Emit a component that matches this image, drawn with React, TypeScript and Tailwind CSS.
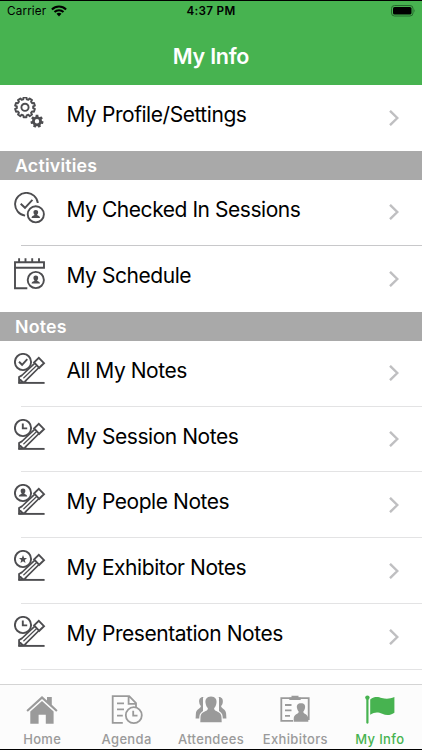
import type { ReactNode } from 'react';

const GREEN = '#47b350';

function gearPath(cx: number, cy: number, outer: number, inner: number, teeth: number) {
  const step = (Math.PI * 2) / teeth;
  const points: string[] = [];
  for (let i = 0; i < teeth; i++) {
    const a = i * step - Math.PI / 2;
    [
      [-0.32, inner],
      [-0.23, outer],
      [0.23, outer],
      [0.32, inner],
    ].forEach(([t, r]) => {
      points.push(
        `${(cx + Math.cos(a + t * step) * r).toFixed(2)} ${(cy + Math.sin(a + t * step) * r).toFixed(2)}`
      );
    });
  }
  return `M${points.join('L')}Z`;
}

function RowSvg({ children }: { children: ReactNode }) {
  return (
    <svg
      viewBox="0 0 32 32"
      className="w-8 h-8 shrink-0"
      fill="none"
      stroke="#4d4d50"
      strokeWidth="1.9"
    >
      {children}
    </svg>
  );
}

function Person({ x, y }: { x: number; y: number }) {
  return (
    <path
      transform={`translate(${x} ${y})`}
      d="M0-4.4C1.8-4.4 2.6-3.1 2.3-1.6C2.2-.7 1.4 0 1.3.5C1.3 1.3 4.1 1.4 4.2 3.6H-4.2C-4.1 1.4-1.3 1.3-1.3.5C-1.4 0-2.2-.7-2.3-1.6C-2.6-3.1-1.8-4.4 0-4.4Z"
      fill="#4d4d50"
      stroke="none"
    />
  );
}

function GearsIcon() {
  return (
    <RowSvg>
      <path d={gearPath(11, 10.3, 10, 8.2, 10)} strokeLinejoin="round" />
      <circle cx="11" cy="10.3" r="3.6" />
      <path
        d={`${gearPath(23, 24.3, 6.6, 5, 7)}M25.2 24.3a2.2 2.2 0 1 0-4.4 0a2.2 2.2 0 1 0 4.4 0Z`}
        fill="#4d4d50"
        fillRule="evenodd"
        stroke="none"
      />
    </RowSvg>
  );
}

function CheckedInIcon() {
  return (
    <RowSvg>
      <path d="M23.8 11A11.4 11.4 0 1 0 11.1 23.6" />
      <path d="M6.7 11.7L11 15.8L18.4 7.8" />
      <circle cx="21.8" cy="22.3" r="8.1" />
      <Person x={21.8} y={22.3} />
    </RowSvg>
  );
}

function ScheduleIcon() {
  return (
    <RowSvg>
      <path d="M1 4.3H30V9.8H1Z" />
      <path d="M5.1.2V4M11.5.2V4M18.2.2V4M25 .2V4M1 9V30.2H13.3" />
      <circle cx="21.8" cy="22" r="8.1" />
      <Person x={21.8} y={22} />
    </RowSvg>
  );
}

function NoteIcon({ children }: { children: ReactNode }) {
  return (
    <RowSvg>
      <circle cx="9" cy="9" r="8.1" />
      {children}
      <path d="M20.1 9.4L24.8 4.9L30 10.2L25.2 14.8Z" />
      <path d="M20.9 10.2L7.2 23M25 14.5L11.5 27.8" strokeWidth="1.7" />
      <path d="M22.9 12.3L9.4 25.3" strokeWidth="1.2" />
      <path d="M8 22.3L5.1 24V29.5L10.8 29L12 27.2M5 25.5L9 29.4" />
      <path d="M4.4 29.9H30.6" />
    </RowSvg>
  );
}

const noteCheck = <path d="M5 8.8L8.1 11.8L13.3 6.1" />;
const noteClock = <path d="M8.8 4.4V9.4H13.2" />;
const notePerson = <Person x={9} y={9} />;
const noteStar = (
  <path
    d="M9 5.1L10.1 7.9L13 8.1L10.8 10L11.5 12.9L9 11.3L6.5 12.9L7.2 10L5 8.1L7.9 7.9Z"
    fill="#4d4d50"
    stroke="none"
  />
);

interface IMenuRowProps {
  icon: ReactNode;
  label: string;
  divider?: string;
}

function MenuRow({ icon, label, divider }: IMenuRowProps) {
  return (
    <div className="flex flex-col h-[65.9px] shrink-0 bg-white">
      <div className="flex flex-1 items-center pl-3.5 pr-[23px]">
        <div className="pb-[9px]">{icon}</div>
        <span className="flex-1 ml-[20.5px] pb-[5px] text-[21px] leading-7 tracking-[-0.45px] text-black whitespace-nowrap">
          {label}
        </span>
        <svg viewBox="0 0 10 16" className="w-2.5 h-4" fill="none" stroke="#bfbfc1" strokeWidth="2.4">
          <path d="M1 .8L8.3 8L1 15.2" />
        </svg>
      </div>
      {divider && <div className={`h-px ml-[21px] ${divider}`} />}
    </div>
  );
}

function SectionTitle({ title }: { title: string }) {
  return (
    <div className="flex items-center h-[29px] shrink-0 pl-[15px] pt-0.5 bg-[#a9a9a9] text-white text-[17.8px] font-semibold tracking-[0.2px]">
      {title}
    </div>
  );
}

function TabSvg({ children }: { children: ReactNode }) {
  return (
    <svg viewBox="0 0 32 30" className="w-8 h-[30px]" fill="currentColor">
      {children}
    </svg>
  );
}

const tabs = [
  {
    label: 'Home',
    icon: (
      <TabSvg>
        <path d="M.4 15.2L16 1L21 5.4V2H25.8V9.8L31.6 15.2L30.2 16.8L16 4.1L1.8 16.8Z" />
        <path d="M4.3 16.5L16 6.1L27.6 16.5V28.7H19.8V19.8H12.6V28.7H4.3Z" />
      </TabSvg>
    ),
  },
  {
    label: 'Agenda',
    icon: (
      <TabSvg>
        <g fill="none" stroke="currentColor" strokeWidth="1.8">
          <path d="M11.8 27.8H1.7V1.2H18.2L25 8.2V12.2M17.6 1.2V8.8H25M6 8.3H13M6 14.4H13M6 20.6H11.8" />
          <circle cx="22.8" cy="20.2" r="8" />
          <path d="M22.2 15.7V20.7H26.5" />
        </g>
      </TabSvg>
    ),
  },
  {
    label: 'Attendees',
    icon: (
      <TabSvg>
        <path d="M9.5 2.2C5.8 1.2 3.6 3.8 4.2 7.3C4.4 8.9 5 10.2 5.9 11.1C6.1 13.6 1 14.3.9 18.5L.6 23.6H8V2.2Z" />
        <path d="M22.5 2.2C26.2 1.2 28.4 3.8 27.8 7.3C27.6 8.9 27 10.2 26.1 11.1C25.9 13.6 31 14.3 31.1 18.5L31.4 23.6H24V2.2Z" />
        <path
          d="M16 1.4C20.3 1.4 22.2 4.4 21.4 8.3C21.1 10.6 20.2 12.1 19.1 13.3C18.9 17.3 26.3 15.5 26.5 22L26.7 27.2H5.3L5.5 22C5.7 15.5 13.1 17.3 12.9 13.3C11.8 12.1 10.9 10.6 10.6 8.3C9.8 4.4 11.7 1.4 16 1.4Z"
          stroke="#fcfcfc"
          strokeWidth="2.4"
          paintOrder="stroke"
        />
      </TabSvg>
    ),
  },
  {
    label: 'Exhibitors',
    icon: (
      <TabSvg>
        <path
          d="M14 25.8H2.3V3.2H29.7V25M6 10H12.5M6 15.4H12.5M6 20.8H11"
          fill="none"
          stroke="currentColor"
          strokeWidth="1.8"
        />
        <path d="M10.3 4.9V2.5H12.5V.8H19.5V2.5H21.7V4.9Z" />
        <path d="M22 8.2C25.2 8.2 26.6 10.2 26 13C25.8 14.6 25 15.8 24.3 16.6C24.2 19.6 29.3 18.7 29.3 24V26.7H14.7V24C14.7 18.7 19.8 19.6 19.7 16.6C19 15.8 18.2 14.6 18 13C17.4 10.2 18.8 8.2 22 8.2Z" />
      </TabSvg>
    ),
  },
  {
    label: 'My Info',
    active: true,
    icon: (
      <TabSvg>
        <circle cx="3.4" cy="2.6" r="2.2" />
        <path d="M2.3 3H4.5V28Q3.4 29.5 2.3 28Z" />
        <path d="M6.2 4.6C10.7.8 14.7 2.1 17.7 3C22 4.3 25.7 4.1 30.4 2.1V17.7C26.2 20.6 22.5 20.8 18.2 18.8C14 16.8 10.7 16.8 6.2 19.7Z" />
      </TabSvg>
    ),
  },
];

export default function App() {
  return (
    <div className="flex flex-col w-[422px] h-[750px] overflow-hidden bg-white border-y border-black font-['Inter','Roboto',sans-serif]">
      <header className="h-21 shrink-0 text-black" style={{ backgroundColor: GREEN }}>
        <div className="grid grid-cols-3 items-center h-[19px] px-[7px] text-[11.7px] leading-[19px]">
          <div className="flex items-center gap-[5px] pt-px tracking-[0.15px]">
            Carrier
            <svg viewBox="0 0 16 12" className="w-4 h-3 -mt-px" fill="none" stroke="currentColor" strokeWidth="2.1">
              <path d="M.9 4.4A10.3 10.3 0 0 1 15.1 4.4M3.5 7.1A6.5 6.5 0 0 1 12.5 7.1" />
              <path d="M5.5 8.8A3.8 3.8 0 0 1 10.5 8.8L8 11.4Z" fill="currentColor" stroke="none" />
            </svg>
          </div>
          <div className="pt-px text-center font-semibold tracking-[0.3px]">4:37 PM</div>
          <svg viewBox="0 0 25 12" className="justify-self-end w-[25px] h-3 -mr-[1px]">
            <rect x=".5" y=".5" width="21.5" height="10.5" rx="3" fill="none" stroke="#256a2d" />
            <rect x="2" y="2" width="18.5" height="7.5" rx="1.6" fill="black" />
            <path d="M23.3 4Q24.6 5.7 23.3 7.5Z" fill="#256a2d" />
          </svg>
        </div>
        <h1 className="pt-[20px] text-center text-white text-[21.5px] leading-8 font-semibold tracking-[-0.25px]">
          My Info
        </h1>
      </header>

      <main className="flex flex-col flex-1 min-h-0 overflow-hidden">
        <MenuRow icon={<GearsIcon />} label="My Profile/Settings" />
        <SectionTitle title="Activities" />
        <MenuRow icon={<CheckedInIcon />} label="My Checked In Sessions" divider="bg-[#c8c8ca]" />
        <MenuRow icon={<ScheduleIcon />} label="My Schedule" />
        <SectionTitle title="Notes" />
        <MenuRow icon={<NoteIcon>{noteCheck}</NoteIcon>} label="All My Notes" divider="bg-[#e3e3e4]" />
        <MenuRow icon={<NoteIcon>{noteClock}</NoteIcon>} label="My Session Notes" divider="bg-[#e3e3e4]" />
        <MenuRow icon={<NoteIcon>{notePerson}</NoteIcon>} label="My People Notes" divider="bg-[#e3e3e4]" />
        <MenuRow icon={<NoteIcon>{noteStar}</NoteIcon>} label="My Exhibitor Notes" divider="bg-[#e3e3e4]" />
        <MenuRow icon={<NoteIcon>{noteClock}</NoteIcon>} label="My Presentation Notes" divider="bg-[#e3e3e4]" />
      </main>

      <nav className="grid grid-cols-5 h-[65px] shrink-0 bg-[#fcfcfc] border-t border-[#d4d4d4]">
        {tabs.map((tab) => (
          <div
            key={tab.label}
            className="flex flex-col items-center pt-2.5"
            style={{ color: tab.active ? GREEN : '#9a9a9a' }}
          >
            {tab.icon}
            <span className="mt-1.5 text-[13px] leading-4 font-medium tracking-[0.35px] whitespace-nowrap">
              {tab.label}
            </span>
          </div>
        ))}
      </nav>
    </div>
  );
}
